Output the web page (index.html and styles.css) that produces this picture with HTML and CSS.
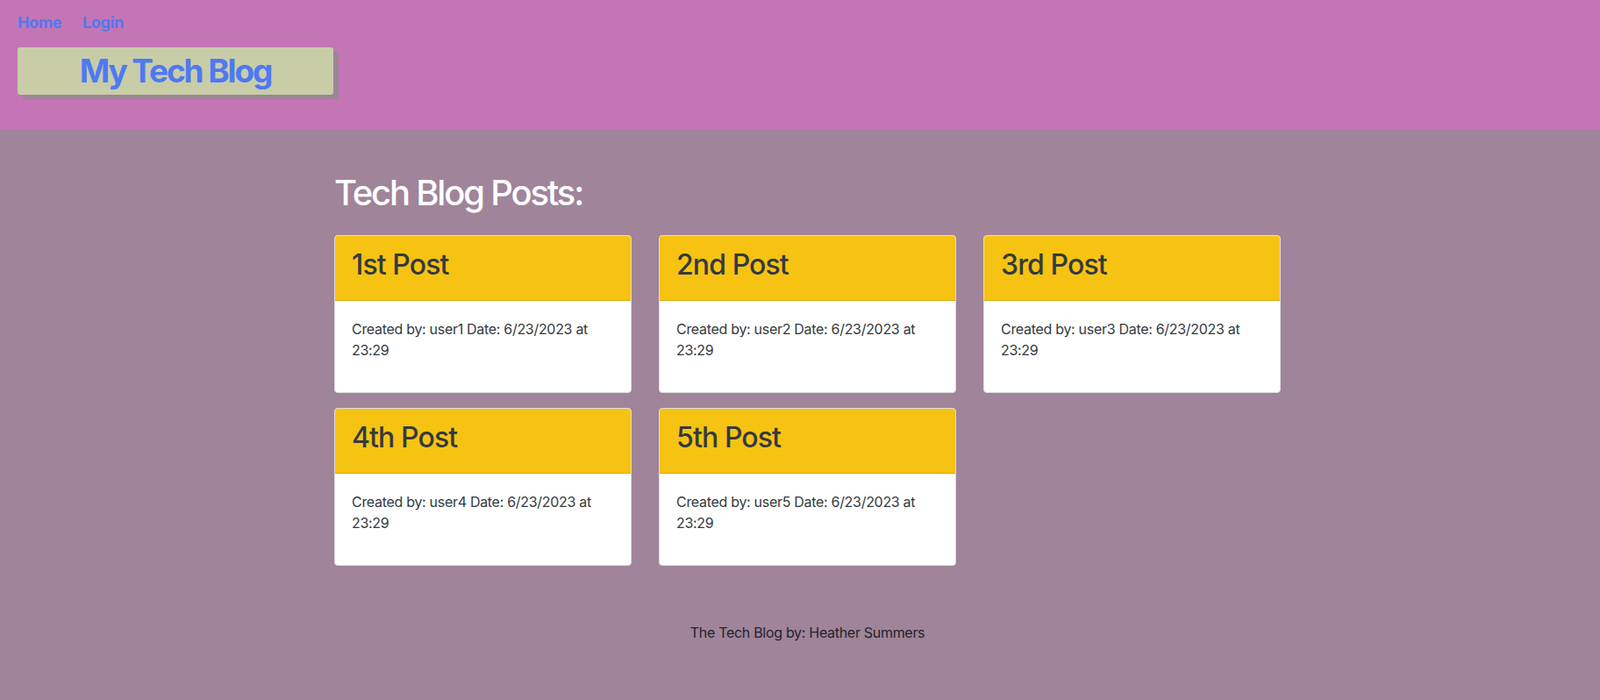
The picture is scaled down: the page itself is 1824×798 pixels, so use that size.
FILE: index.html
```html
<!DOCTYPE html>
<html lang="en">
<head>
<meta charset="utf-8">
<title>My Tech Blog</title>
<link rel="stylesheet" href="styles.css">
</head>
<body>
<header class="site-header">
  <nav class="nav">
    <a class="nav-link" href="#">Home</a>
    <a class="nav-link" href="#">Login</a>
  </nav>
  <div class="brand"><span class="brand-text">My Tech Blog</span></div>
</header>
<main class="main">
  <section class="content">
    <h1 class="page-title">Tech Blog Posts:</h1>
    <div class="grid">
      <article class="card">
        <div class="card-header"><h2 class="card-title">1st Post</h2></div>
        <div class="card-body"><p>Created by: user1 Date: 6/23/2023 at 23:29</p></div>
      </article>
      <article class="card">
        <div class="card-header"><h2 class="card-title">2nd Post</h2></div>
        <div class="card-body"><p>Created by: user2 Date: 6/23/2023 at 23:29</p></div>
      </article>
      <article class="card">
        <div class="card-header"><h2 class="card-title">3rd Post</h2></div>
        <div class="card-body"><p>Created by: user3 Date: 6/23/2023 at 23:29</p></div>
      </article>
      <article class="card">
        <div class="card-header"><h2 class="card-title">4th Post</h2></div>
        <div class="card-body"><p>Created by: user4 Date: 6/23/2023 at 23:29</p></div>
      </article>
      <article class="card">
        <div class="card-header"><h2 class="card-title">5th Post</h2></div>
        <div class="card-body"><p>Created by: user5 Date: 6/23/2023 at 23:29</p></div>
      </article>
    </div>
  </section>
</main>
<footer class="site-footer">The Tech Blog by: Heather Summers</footer>
</body>
</html>
```
FILE: styles.css
```css
* { box-sizing: border-box; }
html, body { margin: 0; padding: 0; }
body {
  font-family: Inter, "Noto Sans", "Liberation Sans", sans-serif;
  font-size: 16px;
  line-height: 24px;
  letter-spacing: -0.3px;
  color: #212529;
  background: #a08499;
  min-height: 100vh;
}
.site-header {
  background: #c475b6;
  padding: 15px 20px 40px;
}
.nav {
  display: flex;
  gap: 24px;
  line-height: 22px;
}
.nav-link {
  color: #4f79f2;
  font-weight: 700;
  font-size: 18px;
  letter-spacing: -0.4px;
  text-decoration: none;
}
.brand {
  margin-top: 17px;
  width: 360px;
  height: 54px;
  background: #c8cda8;
  border-radius: 3px;
  box-shadow: 6px 5px 1px #9c8595;
  display: flex;
  align-items: center;
  justify-content: center;
}
.brand-text {
  color: #4f79f2;
  font-weight: 700;
  font-size: 37px;
  line-height: 54px;
  letter-spacing: -2.1px;
}
.main {
  display: flex;
  justify-content: center;
  padding: 48px 0 0 17px;
}
.content { width: 1079px; }
.page-title {
  margin: 0 0 24px;
  font-size: 40px;
  font-weight: 500;
  line-height: 48px;
  letter-spacing: -2.2px;
  color: #fff;
}
.grid {
  display: grid;
  grid-template-columns: repeat(3, 339px);
  column-gap: 31px;
  row-gap: 17px;
}
.card {
  background: #fff;
  border: 1px solid #dcdcdc;
  border-radius: 4px;
  overflow: hidden;
}
.card-header {
  background: #f6c313;
  border-bottom: 1px solid #d9a90a;
  padding: 14px 19px 21px;
}
.card-title {
  margin: 0;
  font-size: 32px;
  font-weight: 500;
  line-height: 38px;
  letter-spacing: -0.9px;
  color: #343a40;
}
.card-body { padding: 20px 19px; }
.card-body p { margin: 0 0 16px; color: #343a40; }
.site-footer {
  text-align: center;
  padding: 64px 0 40px 17px;
  color: #212529;
}
```
